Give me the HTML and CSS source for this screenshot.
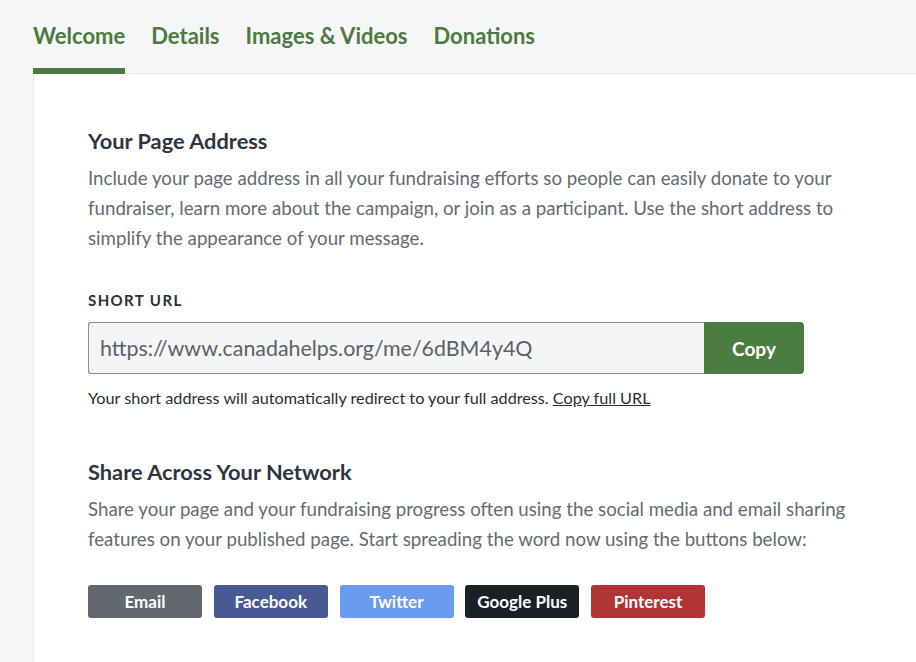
FILE: index.html
```html
<!DOCTYPE html>
<html>
<head>
<meta charset="utf-8">
<link rel="stylesheet" href="styles.css">
</head>
<body>
<div class="page">
  <nav class="tabs">
    <a class="tab active">Welcome</a>
    <a class="tab">Details</a>
    <a class="tab">Images &amp; Videos</a>
    <a class="tab">Donations</a>
  </nav>
  <main class="panel">
    <section class="block">
      <h2 class="title">Your Page Address</h2>
      <p class="lead">Include your page address in all your fundraising efforts so people can easily donate to your fundraiser, learn more about the campaign, or join as a participant. Use the short address to simplify the appearance of your message.</p>
      <div class="label">SHORT URL</div>
      <div class="url-row">
        <div class="url-input">https://www.canadahelps.org/me/6dBM4y4Q</div>
        <button class="copy-btn">Copy</button>
      </div>
      <p class="help">Your short address will automatically redirect to your full address. <a class="link">Copy full URL</a></p>
    </section>
    <section class="block share">
      <h2 class="title">Share Across Your Network</h2>
      <p class="lead">Share your page and your fundraising progress often using the social media and email sharing features on your published page. Start spreading the word now using the buttons below:</p>
      <div class="share-row">
        <button class="sbtn email">Email</button>
        <button class="sbtn facebook">Facebook</button>
        <button class="sbtn twitter">Twitter</button>
        <button class="sbtn gplus">Google Plus</button>
        <button class="sbtn pinterest">Pinterest</button>
      </div>
    </section>
  </main>
</div>
</body>
</html>
```
FILE: styles.css
```css
* { box-sizing: border-box; }
html, body { margin: 0; padding: 0; }
body {
  background: #f5f6f8;
  font-family: Lato, "Open Sans", sans-serif;
  width: 916px;
  height: 662px;
  overflow: hidden;
}
.page {
  padding-left: 33px;
}
.tabs {
  display: flex;
  gap: 26px;
  height: 74px;
  align-items: stretch;
}
.tab {
  display: block;
  color: #4b7a3f;
  font-size: 22px;
  font-weight: 700;
  padding-top: 22px;
  border-bottom: 6px solid transparent;
  white-space: nowrap;
}
.tab.active {
  border-bottom-color: #4b7a3f;
}
.panel {
  background: #fff;
  border-left: 1px solid #e6e8eb;
  border-top: 1px solid #e6e8eb;
  margin-top: -1px;
  height: 600px;
  padding: 52px 0 0 54px;
}
.title {
  margin: 0;
  font-size: 21.8px;
  font-weight: 700;
  color: #2e3440;
  line-height: 30px;
}
.lead {
  margin: 7px 0 0;
  width: 775px;
  font-size: 18.7px;
  line-height: 30px;
  color: #666a70;
}
.label {
  margin-top: 38px;
  font-size: 15px;
  font-weight: 700;
  letter-spacing: 1.4px;
  color: #2b2f36;
}
.url-row {
  display: flex;
  margin-top: 13px;
  width: 716px;
  height: 52px;
}
.url-input {
  flex: 1;
  border: 1px solid #849282;
  border-right: none;
  border-radius: 3px 0 0 3px;
  background: #f4f5f6;
  font-size: 21.4px;
  color: #5c6066;
  padding: 0 11px;
  display: flex;
  align-items: center;
}
.copy-btn {
  width: 100px;
  border: none;
  border-radius: 0 4px 4px 0;
  background: #4b7d41;
  color: #fff;
  font-family: Lato, sans-serif;
  font-size: 19px;
  font-weight: 700;
  padding: 0;
}
.help {
  margin: 13px 0 0;
  font-size: 16.2px;
  color: #2a2d32;
  line-height: 22px;
}
.link {
  text-decoration: underline;
  color: #2a2d32;
}
.share {
  margin-top: 48px;
}
.share-row {
  display: flex;
  gap: 11.75px;
  margin-top: 31px;
}
.sbtn {
  width: 114px;
  height: 33px;
  border: none;
  border-radius: 3px;
  color: #fff;
  font-family: Lato, sans-serif;
  font-size: 17px;
  font-weight: 700;
  padding: 0;
}
.email { background: #62666f; }
.facebook { background: #475a94; }
.twitter { background: #6b9bee; }
.gplus { background: #1b1f26; }
.pinterest { background: #b03434; }
```
